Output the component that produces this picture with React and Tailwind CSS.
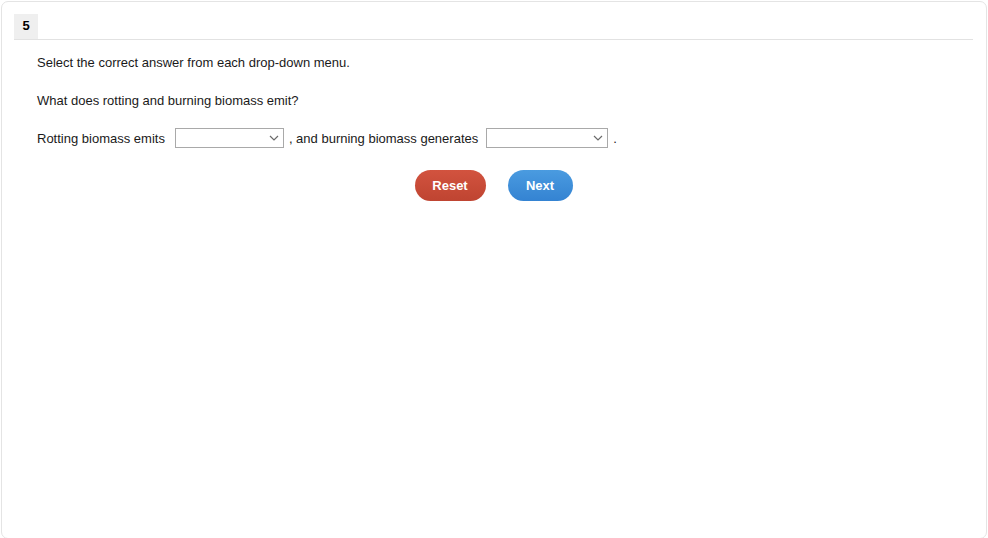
import React from 'react';

const Dropdown = ({ width }) => (
  <span
    className={`inline-flex items-center justify-end h-[20px] border border-[#a9a9a9] bg-white pr-[4px] ${width}`}
  >
    <svg width="10" height="6" viewBox="0 0 10 6" fill="none">
      <path d="M1 1l4 4 4-4" stroke="#6b6b6b" strokeWidth="1.2" />
    </svg>
  </span>
);

export default function App() {
  return (
    <div className="w-[988px] h-[538px] bg-white p-px font-['Liberation_Sans',Arial,sans-serif] text-[13px] text-[#1a1a1a]">
      <div className="h-[538px] rounded-[7px] border border-[#e4e4e4] pt-[12px] px-[12px]">
        <div className="flex border-b border-[#e2e2e2] mr-[1px]">
          <div className="w-[24px] h-[25px] bg-[#efefef] flex items-center justify-center text-[13px] font-bold text-black pb-px">
            5
          </div>
        </div>
        <div className="pl-[23px] pt-[14px]">
          <p className="leading-[17px]">Select the correct answer from each drop-down menu.</p>
          <p className="leading-[17px] mt-[21px]">What does rotting and burning biomass emit?</p>
          <div className="flex items-center mt-[18px] h-[24px]">
            <span>Rotting biomass emits</span>
            <span className="ml-[10px] flex mb-[3px]"><Dropdown width="w-[109px]" /></span>
            <span className="ml-[5px]">, and burning biomass generates</span>
            <span className="ml-[8px] flex mb-[3px]"><Dropdown width="w-[122px]" /></span>
            <span className="ml-[5px]">.</span>
          </div>
          <div className="flex justify-center gap-[22px] mt-[19px] pr-[24px]">
            <button className="w-[71px] h-[31px] rounded-full bg-gradient-to-b from-[#d2533f] to-[#bf4431] text-white font-bold text-[13px]">
              Reset
            </button>
            <button className="w-[65px] h-[31px] rounded-full bg-gradient-to-b from-[#4a9be0] to-[#3483d2] text-white font-bold text-[13px]">
              Next
            </button>
          </div>
        </div>
      </div>
    </div>
  );
}
